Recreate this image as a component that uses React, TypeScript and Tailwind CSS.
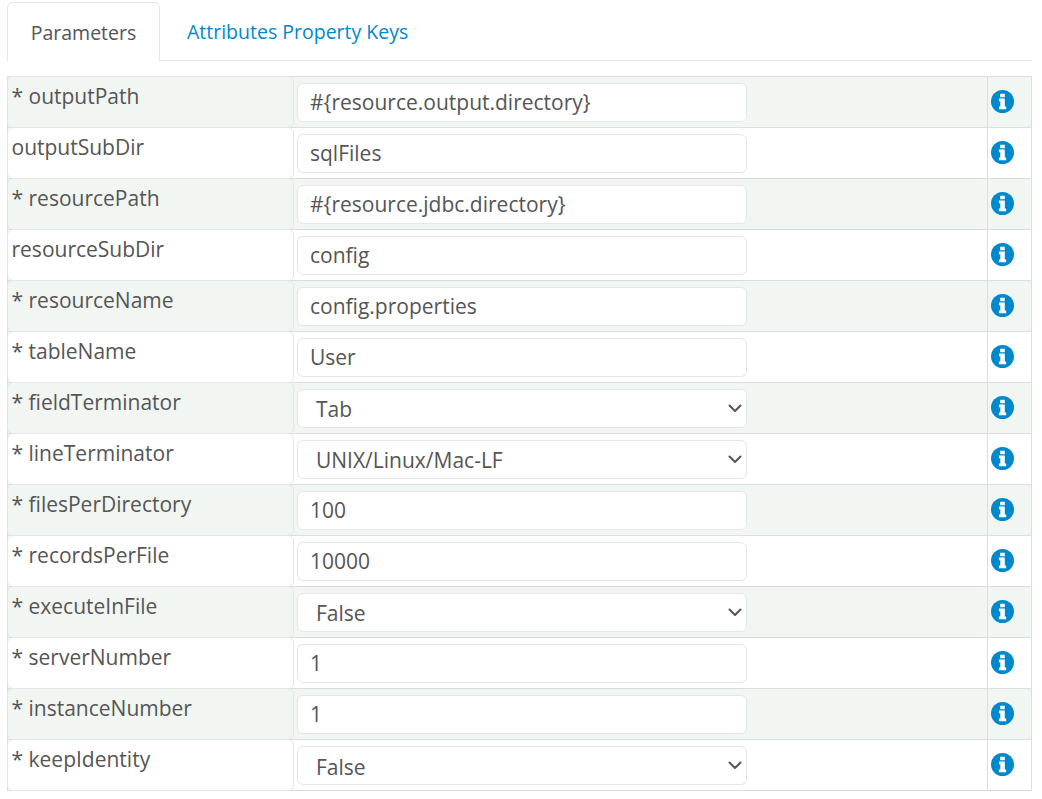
import React from "react";

type Row = { label: string; value: string; select?: boolean };

const rows: Row[] = [
  { label: "* outputPath", value: "#{resource.output.directory}" },
  { label: "outputSubDir", value: "sqlFiles" },
  { label: "* resourcePath", value: "#{resource.jdbc.directory}" },
  { label: "resourceSubDir", value: "config" },
  { label: "* resourceName", value: "config.properties" },
  { label: "* tableName", value: "User" },
  { label: "* fieldTerminator", value: "Tab", select: true },
  { label: "* lineTerminator", value: "UNIX/Linux/Mac-LF", select: true },
  { label: "* filesPerDirectory", value: "100" },
  { label: "* recordsPerFile", value: "10000" },
  { label: "* executeInFile", value: "False", select: true },
  { label: "* serverNumber", value: "1" },
  { label: "* instanceNumber", value: "1" },
  { label: "* keepIdentity", value: "False", select: true },
];

function InfoIcon() {
  return (
    <svg viewBox="0 0 22 22" className="w-[23px] h-[23px]">
      <circle cx="11" cy="11" r="11" fill="#0088cc" />
      <path fill="#fff" d="M8.8 3.7h4.4v3.2H8.8zM7.6 8.2h5.6v7.6h1.3v2.6H7.6v-2.6h1.3v-5H7.6z" />
    </svg>
  );
}

function Field({ row, last }: { row: Row; last: boolean }) {
  if (row.select) {
    return (
      <div className="relative w-[450px] h-[39px]">
        <select
          defaultValue={row.value}
          className={`w-full h-full appearance-none rounded-md border border-[#e6e6e6] bg-white pl-[18px] ${
            last ? "pt-[4px]" : "pt-[2px]"
          } text-[21px] text-[#555] outline-none`}
        >
          <option>{row.value}</option>
        </select>
        <svg
          viewBox="0 0 16 16"
          className="absolute right-[4px] top-[11px] w-[16px] h-[16px] pointer-events-none"
          fill="none"
          stroke="#555"
          strokeWidth="2"
          strokeLinecap="round"
          strokeLinejoin="round"
        >
          <path d="M2.5 5.5 8 11l5.5-5.5" />
        </svg>
      </div>
    );
  }
  return (
    <input
      readOnly
      value={row.value}
      className="block w-[450px] h-[39px] rounded-md border border-[#e6e6e6] bg-white px-[12px] pb-[2px] text-[21px] text-[#555] outline-none"
    />
  );
}

export default function App() {
  return (
    <div className="w-[1042px] h-[799px] bg-white overflow-hidden font-['Open_Sans',sans-serif] text-[#555] pl-[7px] pr-[10px] pt-[2px]">
      <div className="flex h-[59px] border-b border-[#e5e5e5]">
        <div className="w-[153px] h-[59px] rounded-t-md border border-b-0 border-[#e5e5e5] bg-white flex items-center justify-center pt-[1px] text-[19.5px]">
          Parameters
        </div>
        <div className="pl-[27px] flex items-center pt-[1px] text-[19.5px] text-[#0088cc]">
          Attributes Property Keys
        </div>
      </div>
      <div className="mt-[15px] border border-[#dddddd]">
        {rows.map((row, i) => (
          <div
            key={row.label}
            className={`flex ${i === 0 ? "h-[50px]" : "h-[51px] border-t border-[#dddddd]"} ${
              i % 2 === 0 ? "bg-[#f2f6f3]" : "bg-white"
            }`}
          >
            <div className="w-[287px] shrink-0 rounded-md border border-[#e6e6e6] pl-[3.5px] pt-[4px] text-[21px] leading-[30px] -my-px -ml-px">
              {row.label}
            </div>
            <div className="flex-1 pl-[3px] pt-[6px]">
              <Field row={row} last={i === rows.length - 1} />
            </div>
            <div className="w-[44px] shrink-0 border-l border-[#dddddd] flex items-center pl-[3px] pb-[1px]">
              <InfoIcon />
            </div>
          </div>
        ))}
      </div>
    </div>
  );
}
